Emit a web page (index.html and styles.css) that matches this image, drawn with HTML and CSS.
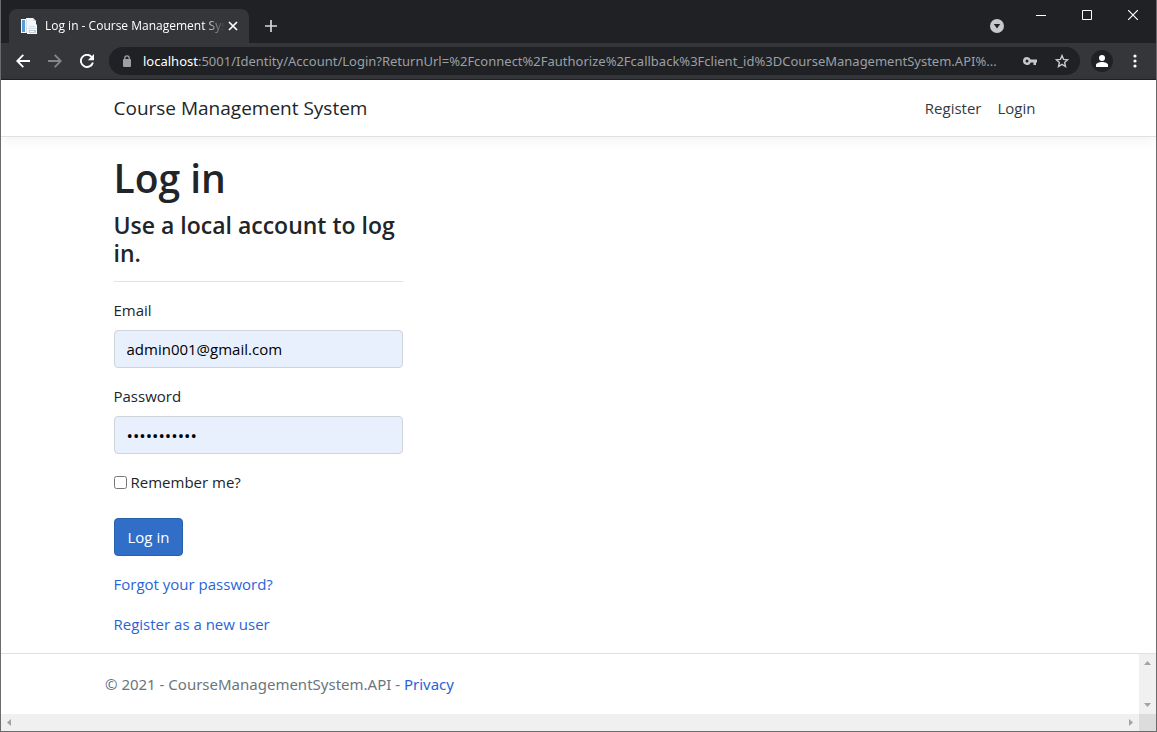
FILE: index.html
```html
<!DOCTYPE html>
<html lang="en">
<head>
<meta charset="utf-8">
<title>Log in - Course Management System</title>
<link rel="stylesheet" href="styles.css">
</head>
<body>
<div class="window">
  <div class="tabstrip">
    <div class="tab">
      <svg class="favicon" width="16" height="16" viewBox="0 0 16 16" aria-hidden="true">
        <path fill="#f3f6f8" d="M0 1h5V0h7l3 3v3l1 1v9H6v-1H0z"/>
        <path fill="#5b9bd5" d="M1 2h3v12H1z"/>
        <path fill="#d3dce3" d="M5 1h1v14H5zM8 8h6v1H8zM7 10h8v1H7zM12 0l3 3h-3z"/>
        <path fill="#c3ced6" d="M8 12h7v3H8z"/>
        <path fill="#fff" d="M9 13h4v1H9z"/>
      </svg>
      <span class="tab-title">Log in - Course Management Sys</span>
      <button class="icon-button tab-close" aria-label="Close tab">
        <svg width="10" height="10" viewBox="0 0 10 10"><path d="M1 1l8 8M9 1L1 9" stroke="#fff" stroke-width="1.7"/></svg>
      </button>
    </div>
    <button class="icon-button new-tab" aria-label="New tab">
      <svg width="12" height="12" viewBox="0 0 12 12"><path d="M6 0v12M0 6h12" stroke="#d5d6d8" stroke-width="1.7"/></svg>
    </button>
    <button class="icon-button tab-search" aria-label="Search tabs">
      <svg width="14" height="14" viewBox="0 0 14 14"><circle cx="7" cy="7" r="7" fill="#c6c8cb"/><path fill="#202124" d="M3.800 5h6.400L7 9.600z"/></svg>
    </button>
    <div class="window-controls">
      <button class="icon-button" aria-label="Minimize"><svg width="10" height="10" viewBox="0 0 10 10"><path fill="#fff" d="M0 5h10v1H0z"/></svg></button>
      <button class="icon-button" aria-label="Maximize"><svg width="10" height="10" viewBox="0 0 10 10"><path fill="none" stroke="#fff" d="M.5.5h9v9h-9z"/></svg></button>
      <button class="icon-button" aria-label="Close"><svg width="10" height="10" viewBox="0 0 10 10"><path d="M0 0l10 10M10 0L0 10" stroke="#fff" stroke-width="1.200"/></svg></button>
    </div>
  </div>
  <div class="toolbar">
    <button class="icon-button tool" aria-label="Back"><svg width="14" height="14" viewBox="0 0 14 14"><path d="M14 7H1.500M7.300 .9L1.200 7l6.100 6.100" fill="none" stroke="#fff" stroke-width="1.800"/></svg></button>
    <button class="icon-button tool" aria-label="Forward"><svg width="14" height="14" viewBox="0 0 14 14"><path d="M0 7h12.500M6.700 .9L12.800 7l-6.100 6.100" fill="none" stroke="#85868a" stroke-width="1.800"/></svg></button>
    <button class="icon-button tool" aria-label="Reload"><svg width="14" height="14" viewBox="0 0 14 14"><path d="M12.900 8.500A6.100 6.100 0 1 1 11.500 2.800" fill="none" stroke="#fff" stroke-width="1.900"/><path fill="#fff" d="M14 0v6.200H7.800z"/></svg></button>
    <div class="address">
      <svg class="lock" width="10" height="12" viewBox="0 0 10 12" aria-hidden="true"><rect x="1" y="4" width="8" height="8" rx="1" fill="#9aa0a6"/><path d="M2.800 4.500V3a2.200 2.200 0 0 1 4.400 0v1.500" fill="none" stroke="#9aa0a6" stroke-width="1.300"/></svg>
      <span class="url"><span class="host">localhost</span>:5001/Identity/Account/Login?ReturnUrl=%2Fconnect%2Fauthorize%2Fcallback%3Fclient_id%3DCourseManagementSystem.API%...</span>
      <button class="icon-button tool" aria-label="Passwords"><svg width="14" height="8" viewBox="0 0 14 8"><path fill="#c6c8cb" fill-rule="evenodd" d="M4 0a4 4 0 0 1 3.700 2.500H14v3h-1V8h-2.500V5.500H7.700A4 4 0 1 1 4 0zm0 2.500a1.500 1.500 0 1 0 0 3 1.500 1.500 0 0 0 0-3z"/></svg></button>
      <button class="icon-button tool" aria-label="Bookmark"><svg width="14" height="14" viewBox="0 0 14 14"><path d="M7 1.600l1.600 3.800 4.100.4-3.100 2.700.9 4L7 10.400l-3.500 2.100.9-4L1.300 5.800l4.100-.4z" fill="none" stroke="#c6c8cb" stroke-width="1.400"/></svg></button>
    </div>
    <button class="icon-button profile" aria-label="Profile"><svg width="12" height="12" viewBox="0 0 12 12"><circle cx="6" cy="3" r="3" fill="#fff"/><path fill="#fff" d="M0 12v-2c0-2 3.500-3 6-3s6 1 6 3v2z"/></svg></button>
    <button class="icon-button menu" aria-label="Menu"><svg width="4" height="14" viewBox="0 0 4 14" fill="#fff"><circle cx="2" cy="2" r="1.600"/><circle cx="2" cy="7" r="1.600"/><circle cx="2" cy="12" r="1.600"/></svg></button>
  </div>

  <header class="site-header">
    <nav class="container navbar">
      <a class="brand" href="#">Course Management System</a>
      <a class="nav-link" href="#">Register</a>
      <a class="nav-link" href="#">Login</a>
    </nav>
  </header>

  <main class="container main">
    <form class="login">
      <h1>Log in</h1>
      <h4>Use a local account to log in.</h4>
      <hr>
      <div class="field">
        <label for="email">Email</label>
        <input class="control" id="email" type="email" value="admin001@gmail.com">
      </div>
      <div class="field">
        <label for="password">Password</label>
        <input class="control password" id="password" type="password" value="password001">
      </div>
      <div class="check">
        <input id="remember" type="checkbox">
        <label for="remember">Remember me?</label>
      </div>
      <button class="submit" type="button">Log in</button>
      <p><a href="#">Forgot your password?</a></p>
      <p><a href="#">Register as a new user</a></p>
    </form>
  </main>

  <footer class="footer">
    <div class="footer-content">
      <div class="container">© 2021 - CourseManagementSystem.API - <a href="#">Privacy</a></div>
    </div>
    <div class="scroll-y">
      <svg width="7" height="4" viewBox="0 0 7 4"><path fill="#a3a3a3" d="M0 4h7L3.500 0z"/></svg>
      <svg width="7" height="4" viewBox="0 0 7 4"><path fill="#a3a3a3" d="M0 0h7L3.500 4z"/></svg>
    </div>
    <div class="scroll-x">
      <svg width="4" height="7" viewBox="0 0 4 7"><path fill="#a3a3a3" d="M4 0v7L0 3.500z"/></svg>
      <svg width="4" height="7" viewBox="0 0 4 7"><path fill="#a3a3a3" d="M0 0v7l4-3.500z"/></svg>
    </div>
    <div class="scroll-corner"></div>
  </footer>
</div>
</body>
</html>
```
FILE: styles.css
```css
*, *::before, *::after { box-sizing: border-box; }

body {
  margin: 0;
  font-family: "Open Sans", "Noto Sans", sans-serif;
  font-size: 15px;
  line-height: 24px;
  color: #212529;
  background: #fff;
}

svg { display: block; flex: none; }
a { color: #2a64d8; text-decoration: none; }

.window {
  display: flex;
  flex-direction: column;
  min-height: 100vh;
  border: 1px solid #6b6b6b;
  border-top: 0;
}

.icon-button {
  display: flex;
  align-items: center;
  justify-content: center;
  flex: none;
  padding: 0;
  border: 0;
  background: none;
}

/* Browser frame */
.tabstrip {
  display: flex;
  align-items: flex-end;
  height: 43px;
  padding-left: 8px;
  background: #202124;
}

.tab {
  display: flex;
  align-items: center;
  width: 240px;
  height: 34px;
  padding: 0 8px 0 12px;
  border-radius: 8px 8px 0 0;
  background: #35363a;
  color: #fff;
  font-size: 12px;
}

.tab-title {
  flex: 1;
  min-width: 0;
  margin-left: 8px;
  white-space: nowrap;
  mask-image: linear-gradient(to right, #000 88%, transparent);
}

.tab-close { width: 16px; height: 16px; }
.new-tab { width: 28px; height: 34px; margin-left: 8px; }
.tab-search { width: 28px; height: 34px; margin-left: auto; margin-right: 7px; }
.window-controls { display: flex; align-self: flex-start; }
.window-controls .icon-button { width: 46px; height: 30px; }

.toolbar {
  display: flex;
  align-items: center;
  height: 37px;
  padding: 0 7px 0 6px;
  border-bottom: 1px solid #202124;
  background: #35363a;
}

.tool { width: 32px; height: 28px; }

.address {
  display: flex;
  align-items: center;
  flex: 1;
  min-width: 0;
  height: 28px;
  margin: 0 11px 0 6px;
  padding: 0 2px 0 13px;
  border-radius: 14px;
  background: #202124;
}

.url {
  flex: 1;
  min-width: 0;
  margin-left: 11px;
  overflow: hidden;
  white-space: nowrap;
  color: #9aa0a6;
  font-family: "Noto Sans", sans-serif;
  font-size: 13px;
}

.host { color: #fff; }
.profile { width: 22px; height: 22px; border-radius: 50%; background: #202124; }
.menu { width: 28px; height: 28px; margin-left: 8px; }

/* Page */
.container {
  width: 100%;
  max-width: 960px;
  margin: 0 auto;
  padding: 0 15px;
}

.site-header {
  padding: 8px 0;
  border-bottom: 1px solid #dee2e6;
  box-shadow: 0 4px 12px rgba(0, 0, 0, .05);
}

.navbar { display: flex; align-items: center; height: 40px; }
.brand { margin-right: auto; color: #212529; font-size: 19px; }
.nav-link { padding: 0 8px; color: #343a40; }

.main { flex: 1; padding-top: 16px; }
.login { width: 289px; }

h1, h4 { margin: 0; font-weight: 600; }
h1 { margin-bottom: 8px; font-size: 39px; line-height: 50px; }
h4 { font-size: 23px; line-height: 28px; }

hr {
  margin: 14px 0 16px;
  border: 0;
  border-top: 1px solid #e0e1e2;
}

.field { margin-bottom: 16px; }
.field label { display: block; margin-bottom: 8px; }

.control {
  display: block;
  width: 100%;
  height: 38px;
  padding: 6px 12px;
  border: 1px solid #ced4da;
  border-radius: 4px;
  background: #e8f0fe;
  color: #000;
  font: inherit;
}

.password { font-size: 17px; }

.check { display: flex; align-items: center; gap: 4px; margin-bottom: 24px; }
.check input { width: 13px; height: 13px; margin: 0; }

.submit {
  height: 38px;
  padding: 0 13px;
  border: 1px solid #2861ae;
  border-radius: 4px;
  background: #306ec8;
  color: #fff;
  font: inherit;
}

p { margin: 16px 0; }

/* Footer with its scroll bars */
.footer {
  display: grid;
  grid-template-columns: 1fr 17px;
  grid-template-rows: 60px 17px;
  border-top: 1px solid #dee2e6;
  color: #6c757d;
}

.footer-content { font-family: "Noto Sans", sans-serif; line-height: 60px; }

.scroll-y, .scroll-x {
  display: flex;
  align-items: center;
  justify-content: space-between;
  background: #f0f0f0;
}

.scroll-y { flex-direction: column; padding: 7px 0; }
.scroll-x { padding: 0 6px; }
.scroll-corner { background: #dcdcdc; }
```
